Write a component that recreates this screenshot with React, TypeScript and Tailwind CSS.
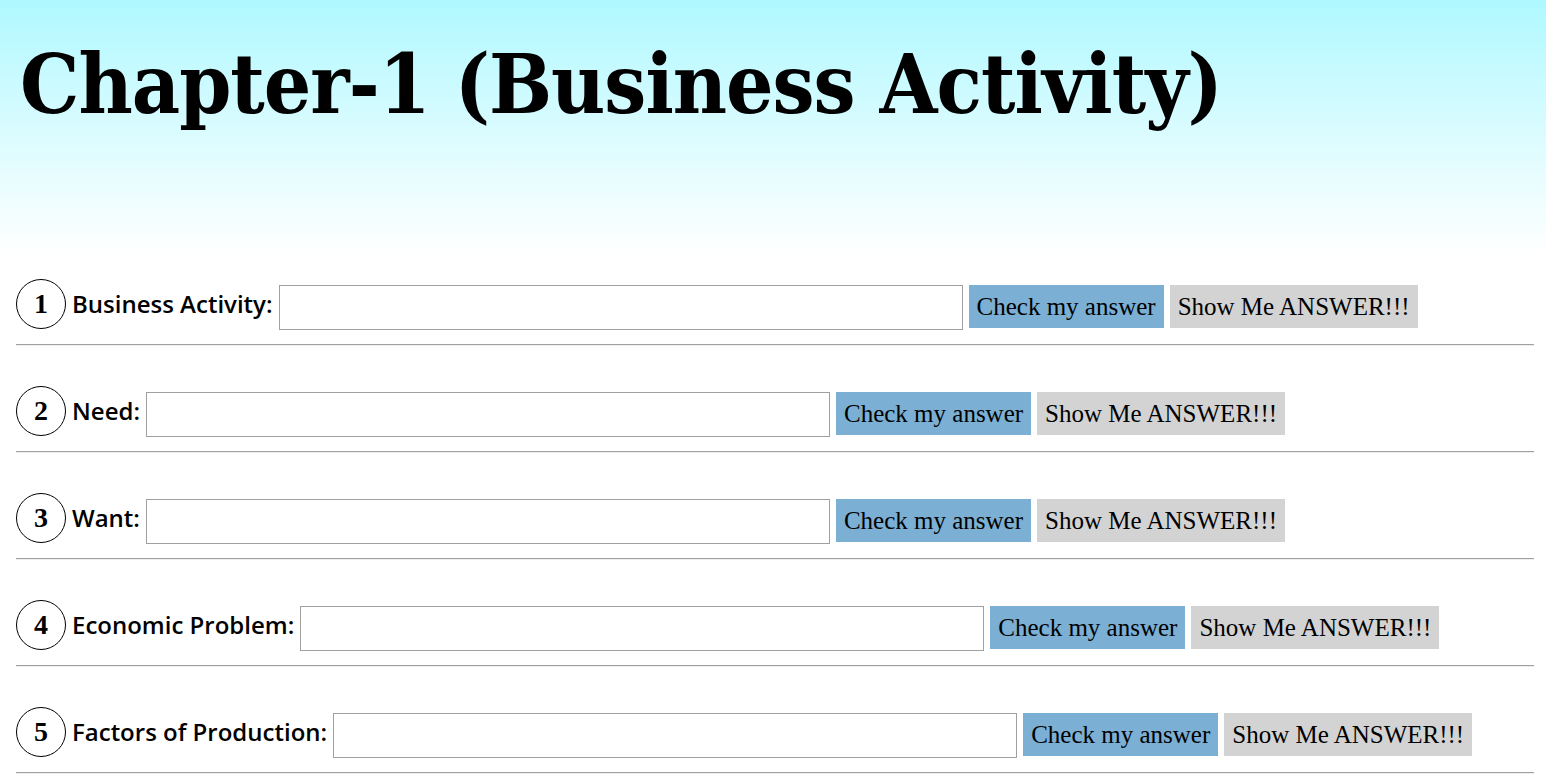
import React from "react";

const rows = [
  "Business Activity:",
  "Need:",
  "Want:",
  "Economic Problem:",
  "Factors of Production:",
];

function Row({ n, label }: { n: number; label: string }) {
  return (
    <div>
      <div className="flex items-center gap-[6px] h-[52px]">
        <div className="w-[50px] h-[50px] rounded-full border border-black flex items-center justify-center shrink-0 text-[28px] font-bold leading-none text-black" style={{ fontFamily: '"Liberation Serif", serif' }}>
          {n}
        </div>
        <span className="text-[24px] font-semibold text-black leading-none whitespace-nowrap" style={{ fontFamily: '"Open Sans", sans-serif' }}>
          {label}
        </span>
        <input type="text" className="w-[684px] h-[45px] border border-[#a0a0a0] bg-white outline-none mt-[6px]" />
        <button className="h-[43px] px-[8px] bg-[#7bafd4] text-black text-[25px] leading-none whitespace-nowrap mt-[4px]" style={{ fontFamily: '"Liberation Serif", serif' }}>
          Check my answer
        </button>
        <button className="h-[43px] px-[8px] bg-[#d3d3d3] text-black text-[25px] leading-none whitespace-nowrap mt-[4px]" style={{ fontFamily: '"Liberation Serif", serif' }}>
          Show Me ANSWER!!!
        </button>
      </div>
      <div className="mt-[14px] mr-[-4px] border-t border-t-[#a0a0a0] border-b border-b-[#eeeeee]" />
    </div>
  );
}

export default function App() {
  return (
    <div className="min-h-[782px] bg-white">
      <div className="h-[255px] bg-gradient-to-b from-[#aef8ff] to-white pl-[20px] pt-[43px]">
        <h1 className="text-[83px] font-bold leading-none text-black whitespace-nowrap tracking-[-1px]" style={{ fontFamily: '"DejaVu Serif Condensed", "DejaVu Serif", serif' }}>
          Chapter-1 (Business Activity)
        </h1>
      </div>
      <div className="pl-[16px] pr-[16px] pt-[23px] flex flex-col gap-[39px]">
        {rows.map((r, i) => (
          <Row key={i} n={i + 1} label={r} />
        ))}
      </div>
    </div>
  );
}
